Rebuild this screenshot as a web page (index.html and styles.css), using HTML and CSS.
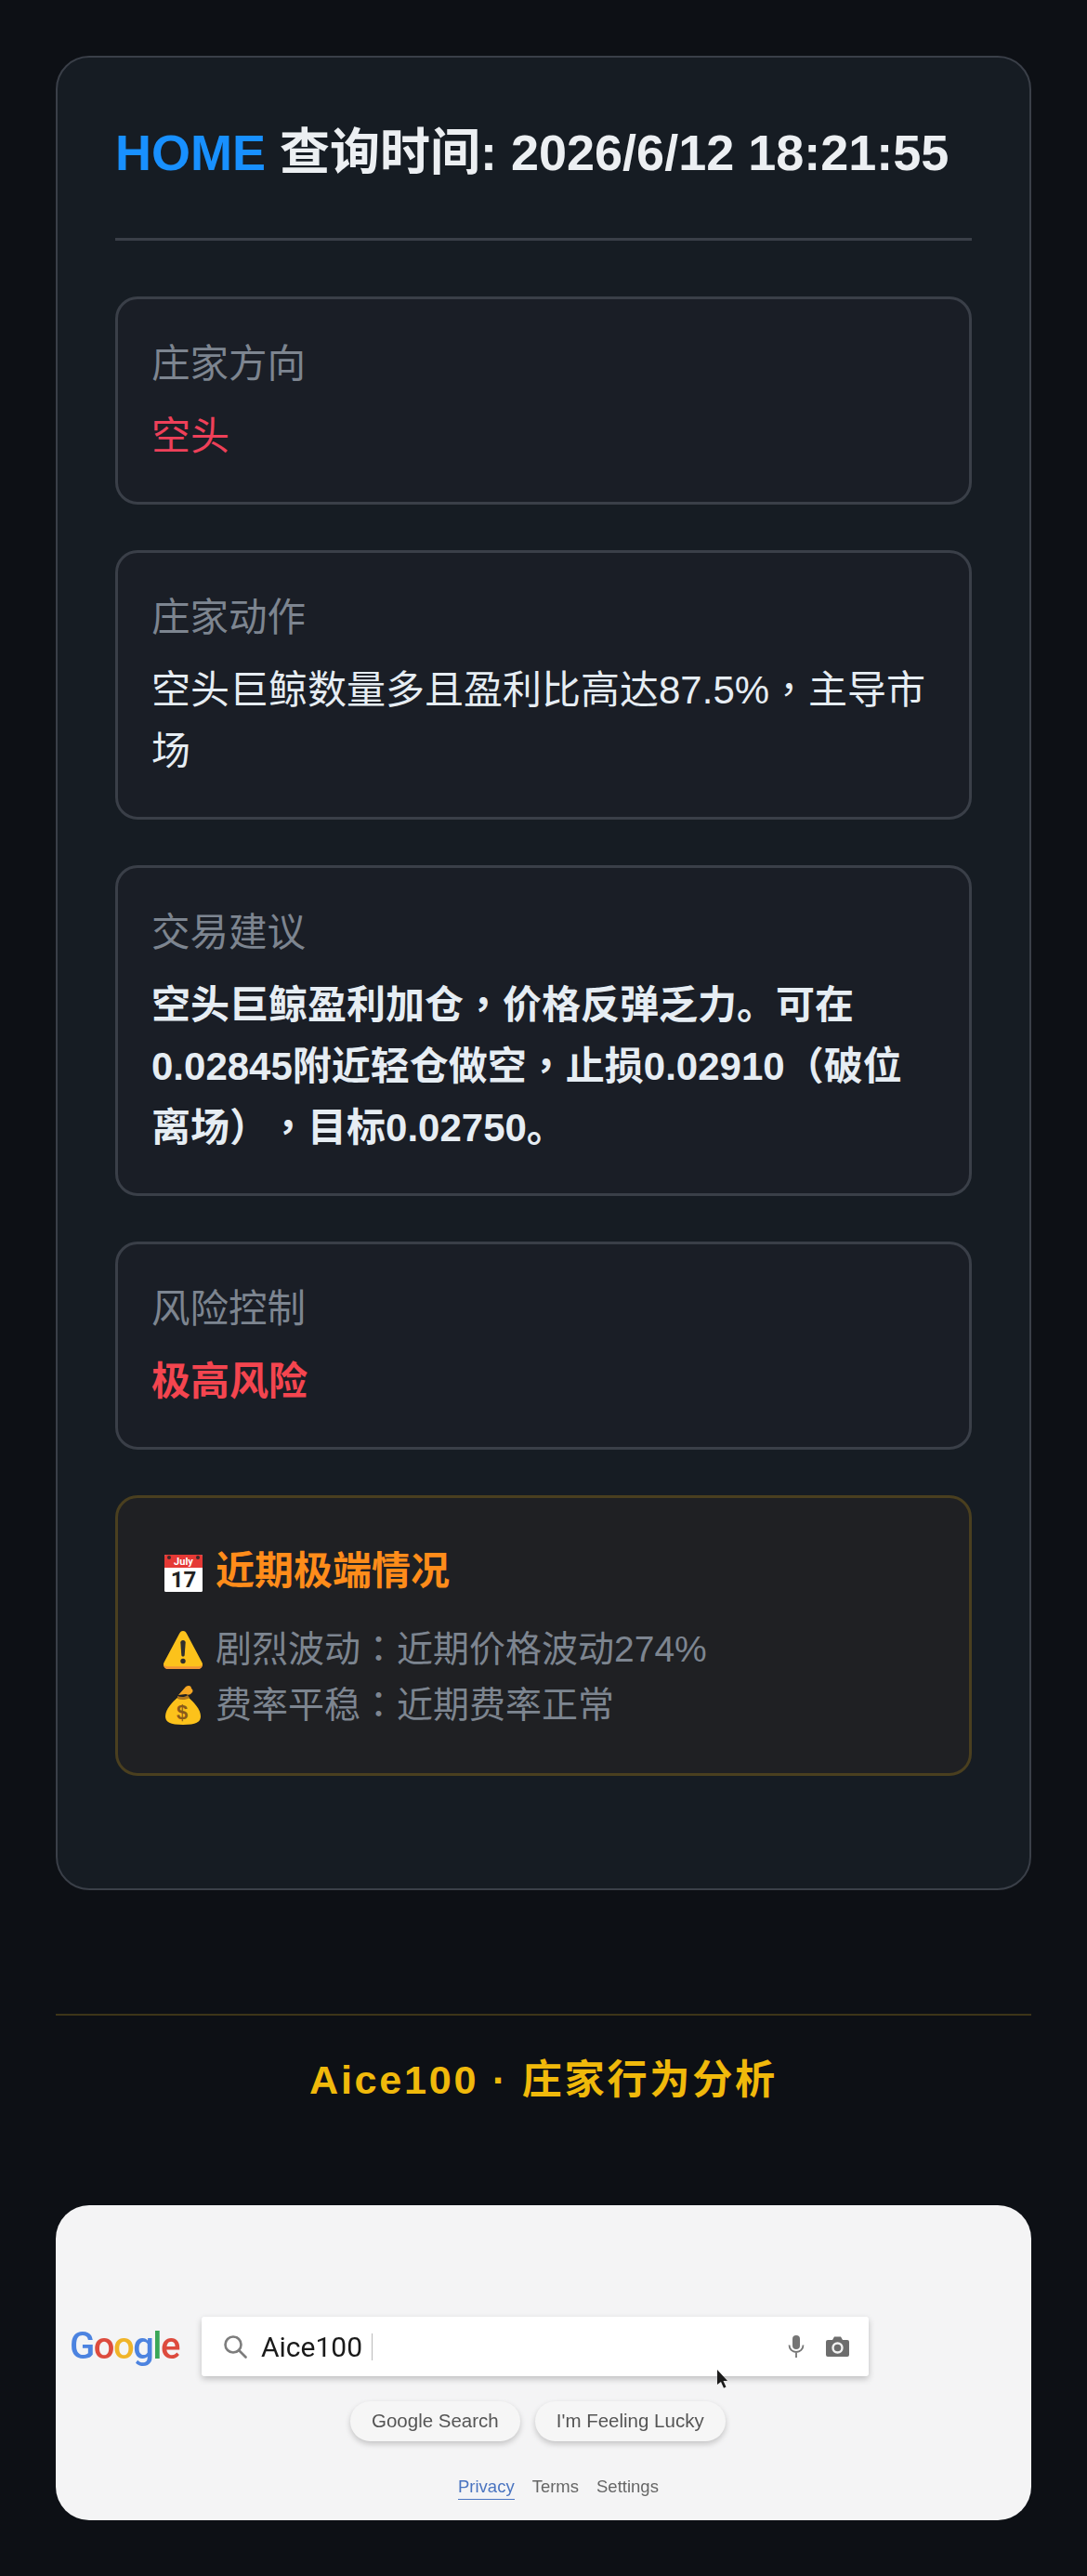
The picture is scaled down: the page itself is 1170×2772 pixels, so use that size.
FILE: index.html
```html
<!DOCTYPE html>
<html lang="zh-CN">
<head>
<meta charset="UTF-8">
<meta name="viewport" content="width=device-width, initial-scale=1.0">
<title>Aice100</title>
<link rel="stylesheet" href="styles.css">
</head>
<body>

<div class="card">
  <h1 class="title"><span class="symbol">HOME</span> 查询时间: 2026/6/12 18:21:55</h1>

  <div class="item">
    <div class="label">庄家方向</div>
    <div class="value short">空头</div>
  </div>

  <div class="item">
    <div class="label">庄家动作</div>
    <div class="value">空头巨鲸数量多且盈利比高达87.5%<span class="punct">，</span>主导市场</div>
  </div>

  <div class="item">
    <div class="label">交易建议</div>
    <div class="value strong">空头巨鲸盈利加仓<span class="punct">，</span>价格反弹乏力。可在0.02845附近轻仓做空<span class="punct">，</span>止损0.02910<span class="punct">（</span>破位离场<span class="punct">）</span><span class="punct">，</span>目标0.02750。</div>
  </div>

  <div class="item">
    <div class="label">风险控制</div>
    <div class="value danger">极高风险</div>
  </div>

  <div class="extreme">
    <div class="extreme-title">
      <svg class="emoji-cal" viewBox="0 0 41 43">
        <rect x="0" y="3" width="41" height="40" rx="1.5" fill="#fff"/>
        <path d="M0 17V4.500A1.500 1.500 0 0 1 1.500 3h38A1.500 1.500 0 0 1 41 4.500V17z" fill="#e53935"/>
        <circle cx="5" cy="6" r="2" fill="#3a2a2a"/>
        <circle cx="36" cy="6" r="2" fill="#3a2a2a"/>
        <text x="20.500" y="14" class="cal-month">July</text>
        <text x="20.500" y="38" class="cal-day">17</text>
      </svg>
      <span>近期极端情况</span>
    </div>
    <div class="extreme-line">
      <svg class="emoji" viewBox="0 0 44 44">
        <path d="M22 2c-2 0-3 1-4 3L1.500 36c-1.500 3 0 6 3.500 6h34c3.500 0 5-3 3.500-6L26 5c-1-2-2-3-4-3z" fill="#fcc21b"/>
        <path d="M1.500 37.500C1 40.500 2.500 43 5 43h34c2.500 0 4-2.500 3.500-5.500-.5 1.800-1.800 2.700-3.500 2.700H5c-1.700 0-3-.9-3.500-2.700z" fill="#f19534"/>
        <path d="M19.300 14.500c0-1.600 1.200-2.500 2.700-2.500s2.700.9 2.700 2.500l-1 13.500c-.1 1-.8 1.500-1.700 1.500s-1.600-.5-1.700-1.500z" fill="#2f2f2f"/>
        <circle cx="22" cy="34.500" r="2.700" fill="#2f2f2f"/>
      </svg>
      <span>剧烈波动<span class="punct">：</span>近期价格波动274%</span>
    </div>
    <div class="extreme-line">
      <svg class="emoji" viewBox="0 0 44 44">
        <path d="M17 13c-6 5-14 13-14 21 0 6 5 9 19 9s19-3 19-9c0-8-8-16-14-21z" fill="#fcc21b"/>
        <path d="M16 12c4 1.500 8 1.500 11-1l2 3c-4 2.500-9 2.500-13 1z" fill="#b0761c"/>
        <path d="M17 11l8-9c3-2 6-1 6 2 2 1 2 4 0 5-1 2-4 2-6 1z" fill="#f5a623"/>
        <text x="21" y="37" class="bag-sign">$</text>
      </svg>
      <span>费率平稳<span class="punct">：</span>近期费率正常</span>
    </div>
  </div>
</div>

<div class="footer">
  <div class="brand">Aice100 · 庄家行为分析</div>
</div>

<div class="shot">
  <div class="search-row">
    <div class="logo"><span class="g-blue">G</span><span class="g-red">o</span><span class="g-yellow">o</span><span class="g-blue">g</span><span class="g-green">l</span><span class="g-red">e</span></div>
    <div class="search-box">
      <svg class="ico-search" viewBox="0 0 26 26" fill="none" stroke="#7d7d7d" stroke-width="2.600">
        <circle cx="11" cy="11" r="8.500"/>
        <path d="M17 17l7.500 7.500" stroke-linecap="round"/>
      </svg>
      <span class="query">Aice100</span>
      <span class="caret"></span>
      <svg class="ico-mic" viewBox="0 0 18 24">
        <rect x="5" y="0" width="8" height="15" rx="4" fill="#757575"/>
        <path d="M1.500 10.500c0 4.500 3.300 7.500 7.500 7.500s7.500-3 7.500-7.500M9 18v6" fill="none" stroke="#757575" stroke-width="1.800"/>
      </svg>
      <svg class="ico-cam" viewBox="0 0 25 22">
        <path d="M2 4h5l2-3.500h7L18 4h5a2 2 0 0 1 2 2v14a2 2 0 0 1-2 2H2a2 2 0 0 1-2-2V6a2 2 0 0 1 2-2z" fill="#6d6d6d"/>
        <circle cx="12.500" cy="12.500" r="5" fill="none" stroke="#f2f2f2" stroke-width="2.400"/>
      </svg>
    </div>
  </div>
  <div class="btn-row">
    <div class="btn">Google Search</div>
    <div class="btn">I'm Feeling Lucky</div>
  </div>
  <div class="links">
    <span class="link-active">Privacy</span>
    <span>Terms</span>
    <span>Settings</span>
  </div>
  <svg class="pointer" viewBox="0 0 12 20">
    <path d="M0 0l11 12H6.500l3 6.500-2.500 1.300-3-6.800L0 16z" fill="#1c1c1c"/>
  </svg>
</div>

</body>
</html>
```

FILE: styles.css
```css
*{
  margin: 0;
  padding: 0;
  box-sizing: border-box;
}

body{
  background: #0d1015;
  padding: 60px 60px 60px;
  font-family: "Liberation Sans", "Noto Sans CJK SC", sans-serif;
  color: #e6edf3;
  text-spacing-trim: space-all;
}

.card{
  background: #161c23;
  border: 2px solid #3a3f48;
  border-radius: 36px;
  padding: 60px 62px 0;
  height: 1974px;
}

.title{
  font-size: 54px;
  line-height: 84px;
  font-weight: bold;
  color: #eceff2;
  padding-bottom: 50px;
  border-bottom: 3px solid #3a3f48;
  margin-bottom: 60px;
  white-space: nowrap;
}

.symbol{
  color: #1890ff;
}

.item{
  background: #1a1e26;
  border: 3px solid #3a3f48;
  border-radius: 24px;
  padding: 36px 36px 37px;
  margin-bottom: 49px;
}

.label{
  font-size: 41.500px;
  line-height: 67px;
  color: #7d8590;
  margin-bottom: 12px;
}

.value{
  font-size: 42px;
  line-height: 66px;
  color: #e6edf3;
}

.short{
  color: #ee4059;
}

.strong{
  font-weight: bold;
}

.danger{
  font-weight: bold;
  color: #f4454f;
}

/* 标点居中 */
.punct{
  font-family: "Noto Sans CJK TC", sans-serif;
  font-feature-settings: "locl" 0;
  line-height: 0;
}

.extreme{
  background: #1f2023;
  border: 3px solid #4a3f1f;
  border-radius: 24px;
  padding: 49px 48px;
  height: 302px;
}

.extreme-title{
  display: flex;
  align-items: center;
  gap: 14px;
  font-size: 42px;
  line-height: 60px;
  font-weight: bold;
  color: #ff8c1a;
  margin-bottom: 24px;
}

.emoji-cal{
  width: 41px;
  height: 43px;
  margin-left: 2px;
}

.cal-month{
  font: bold 11px "Roboto", sans-serif;
  fill: #fff;
  text-anchor: middle;
}

.cal-day{
  font: bold 24px "Roboto", sans-serif;
  fill: #222;
  text-anchor: middle;
}

.bag-sign{
  font: bold 22px "Liberation Sans", sans-serif;
  fill: #8a5a1a;
  text-anchor: middle;
}

.extreme-line{
  display: flex;
  align-items: center;
  gap: 13px;
  font-size: 39px;
  line-height: 60px;
  color: #7d8590;
}

.emoji{
  width: 44px;
  height: 44px;
}

.footer{
  margin-top: 133px;
  border-top: 2px solid #3d3518;
  text-align: center;
  padding-top: 38px;
  margin-bottom: 104px;
}

.brand{
  font-size: 43.200px;
  line-height: 62px;
  font-weight: bold;
  letter-spacing: 2.700px;
  color: #f0b90b;
}

.shot{
  position: relative;
  height: 339px;
  background: #f4f4f5;
  border-radius: 36px;
  font-family: "Liberation Sans", sans-serif;
  padding-top: 120px;
}

.search-row{
  display: flex;
  align-items: center;
  gap: 22px;
  padding-left: 15px;
  filter: blur(.4px);
}

.logo{
  width: 120px;
  font-family: "Roboto", sans-serif;
  font-weight: 500;
  font-size: 40px;
  line-height: 60px;
  letter-spacing: -1.500px;
}

.g-blue{ color: #4c83e0; }
.g-red{ color: #dd4b3e; }
.g-yellow{ color: #f0b429; }
.g-green{ color: #3aa757; }

.search-box{
  display: flex;
  align-items: center;
  width: 718px;
  height: 64px;
  background: #fff;
  border-radius: 3px;
  box-shadow: 0 3px 7px rgba(0,0,0,.22);
  padding: 0 21px 0 23px;
}

.ico-search{
  width: 26px;
  height: 26px;
  margin-right: 15px;
}

.query{
  font-family: "Roboto", sans-serif;
  font-size: 30px;
  color: #1a1a1a;
}

.caret{
  width: 1px;
  height: 29px;
  background: #bbb;
  margin-left: 10px;
  margin-right: auto;
}

.ico-mic{
  width: 18px;
  height: 24px;
  margin-right: 23px;
}

.ico-cam{
  width: 25px;
  height: 22px;
}

.btn-row{
  display: flex;
  justify-content: flex-start;
  gap: 16px;
  padding-left: 317px;
  margin-top: 27px;
  filter: blur(.4px);
}

.btn{
  height: 43px;
  padding: 0 23px;
  line-height: 41px;
  border-radius: 22px;
  background: #f6f6f6;
  box-shadow: 0 3px 6px rgba(0,0,0,.2);
  font-size: 20.500px;
  color: #555;
}

.links{
  display: flex;
  gap: 19px;
  padding-left: 433px;
  margin-top: 36px;
  font-size: 18.500px;
  line-height: 26px;
  color: #666;
  filter: blur(.4px);
}

.link-active{
  color: #4a74c0;
  border-bottom: 1px solid #4a74c0;
}

.pointer{
  position: absolute;
  left: 712px;
  top: 177px;
  width: 12px;
  height: 20px;
}
```
